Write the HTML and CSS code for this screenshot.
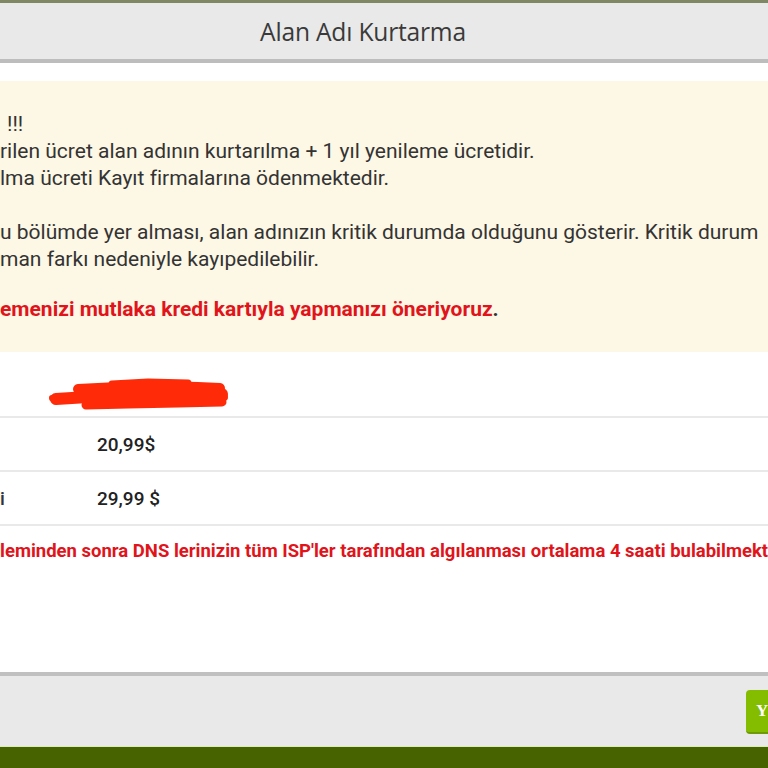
FILE: index.html
```html
<!DOCTYPE html>
<html lang="tr">
<head>
<meta charset="utf-8">
<title>Alan Adı Kurtarma</title>
<link rel="stylesheet" href="styles.css">
</head>
<body>
<div class="page">
  <div class="topstrip"></div>
  <div class="header"><h1 class="title">Alan Adı Kurtarma</h1></div>
  <div class="content">
    <div class="notice">
      <div class="para">
        <div class="line indent">!!!</div>
        <div class="line">rilen ücret alan adının kurtarılma + 1 yıl yenileme ücretidir.</div>
        <div class="line">lma ücreti Kayıt firmalarına ödenmektedir.</div>
      </div>
      <div class="para gap">
        <div class="line">u bölümde yer alması, alan adınızın kritik durumda olduğunu gösterir. Kritik durum</div>
        <div class="line">man farkı nedeniyle kayıpedilebilir.</div>
      </div>
      <div class="para gap2">
        <div class="line warn"><span class="red">emenizi mutlaka kredi kartıyla yapmanızı öneriyoruz</span>.</div>
      </div>
    </div>
    <div class="table">
      <div class="row first">
        <svg class="scribble" width="184" height="40" viewBox="0 0 184 40">
          <g fill="none" stroke="#ff2b08" stroke-linecap="round" stroke-linejoin="round">
            <path d="M8 24 L40 22 L70 21 L120 20 L174 19" stroke-width="12"/>
            <path d="M30 14 L70 12 L110 11 L150 12 L172 13" stroke-width="10"/>
            <path d="M64 9 L100 7 L140 8" stroke-width="7"/>
            <path d="M38 30 L80 29 L130 28 L174 27" stroke-width="9"/>
            <path d="M4 23 L24 22" stroke-width="6"/>
            <path d="M150 24 L176 22" stroke-width="8"/>
          </g>
        </svg>
      </div>
      <div class="row">
        <div class="label"></div>
        <div class="price">20,99$</div>
      </div>
      <div class="row">
        <div class="label">i</div>
        <div class="price">29,99 $</div>
      </div>
    </div>
    <div class="dnsnote">leminden sonra DNS lerinizin tüm ISP'ler tarafından algılanması ortalama 4 saati bulabilmekt</div>
  </div>
  <div class="footer">
    <button class="btn">Y</button>
  </div>
  <div class="bottombar"></div>
</div>
</body>
</html>
```
FILE: styles.css
```css
html, body {
  margin: 0;
  padding: 0;
  background: #ffffff;
}
body {
  width: 768px;
  height: 768px;
  overflow: hidden;
  font-family: Roboto, "Liberation Sans", sans-serif;
}
.page {
  width: 768px;
  height: 768px;
  display: flex;
  flex-direction: column;
  overflow: hidden;
}
.topstrip {
  height: 3px;
  background: #7f8764;
  flex: none;
}
.header {
  height: 56px;
  flex: none;
  background: #e9e9e9;
  border-bottom: 4px solid #bdbdbd;
  display: flex;
  align-items: center;
  justify-content: center;
  padding-right: 42px;
}
.title {
  margin: 0;
  font-family: "Open Sans", "Liberation Sans", sans-serif;
  font-weight: 400;
  font-size: 24.6px;
  color: #3a3a3a;
  letter-spacing: -0.2px;
}
.content {
  height: 609px;
  flex: none;
  background: #ffffff;
  padding-top: 18px;
  box-sizing: border-box;
}
.notice {
  background: #fdf7e5;
  height: 271px;
  box-sizing: border-box;
  padding-top: 30px;
}
.line {
  font-size: 21px;
  line-height: 27px;
  color: #333333;
  white-space: nowrap;
}
.indent {
  padding-left: 7px;
}
.gap {
  margin-top: 27px;
}
.gap2 {
  margin-top: 23px;
}
.warn {
  font-weight: 700;
  color: #333333;
}
.red {
  color: #e0141a;
}
.table {
  display: flex;
  flex-direction: column;
}
.row {
  display: flex;
  align-items: center;
  height: 52px;
  border-bottom: 2px solid #e9e9e9;
}
.row.first {
  height: 66px;
  align-items: flex-start;
  padding-left: 48px;
  box-sizing: border-box;
  padding-top: 23px;
}
.scribble {
  display: block;
}
.label {
  width: 97px;
  flex: none;
  font-size: 19px;
  font-weight: 500;
  color: #333333;
}
.price {
  font-size: 19px;
  font-weight: 500;
  color: #222222;
}
.dnsnote {
  margin-top: 12px;
  font-size: 18.5px;
  line-height: 27px;
  font-weight: 700;
  color: #e0141a;
  white-space: nowrap;
}
.footer {
  flex: none;
  background: #e9e9e9;
  border-top: 4px solid #c0c0c0;
  display: flex;
  justify-content: flex-end;
  align-items: flex-start;
  padding-top: 14px;
  box-sizing: content-box;
  height: 56px;
}
.btn {
  width: 12px;
  height: 42px;
  padding: 0 0 0 10px;
  box-sizing: content-box;
  border: none;
  border-bottom: 2px solid #6f9a08;
  border-radius: 4px 0 0 4px;
  background: #84bd00;
  color: #ffffff;
  font-family: "Liberation Serif", serif;
  font-size: 17px;
  font-weight: 700;
  text-align: left;
  overflow: hidden;
  white-space: nowrap;
}
.bottombar {
  flex: none;
  height: 21px;
  border-top: 1px solid #d8efb5;
  background: #476300;
}
```
